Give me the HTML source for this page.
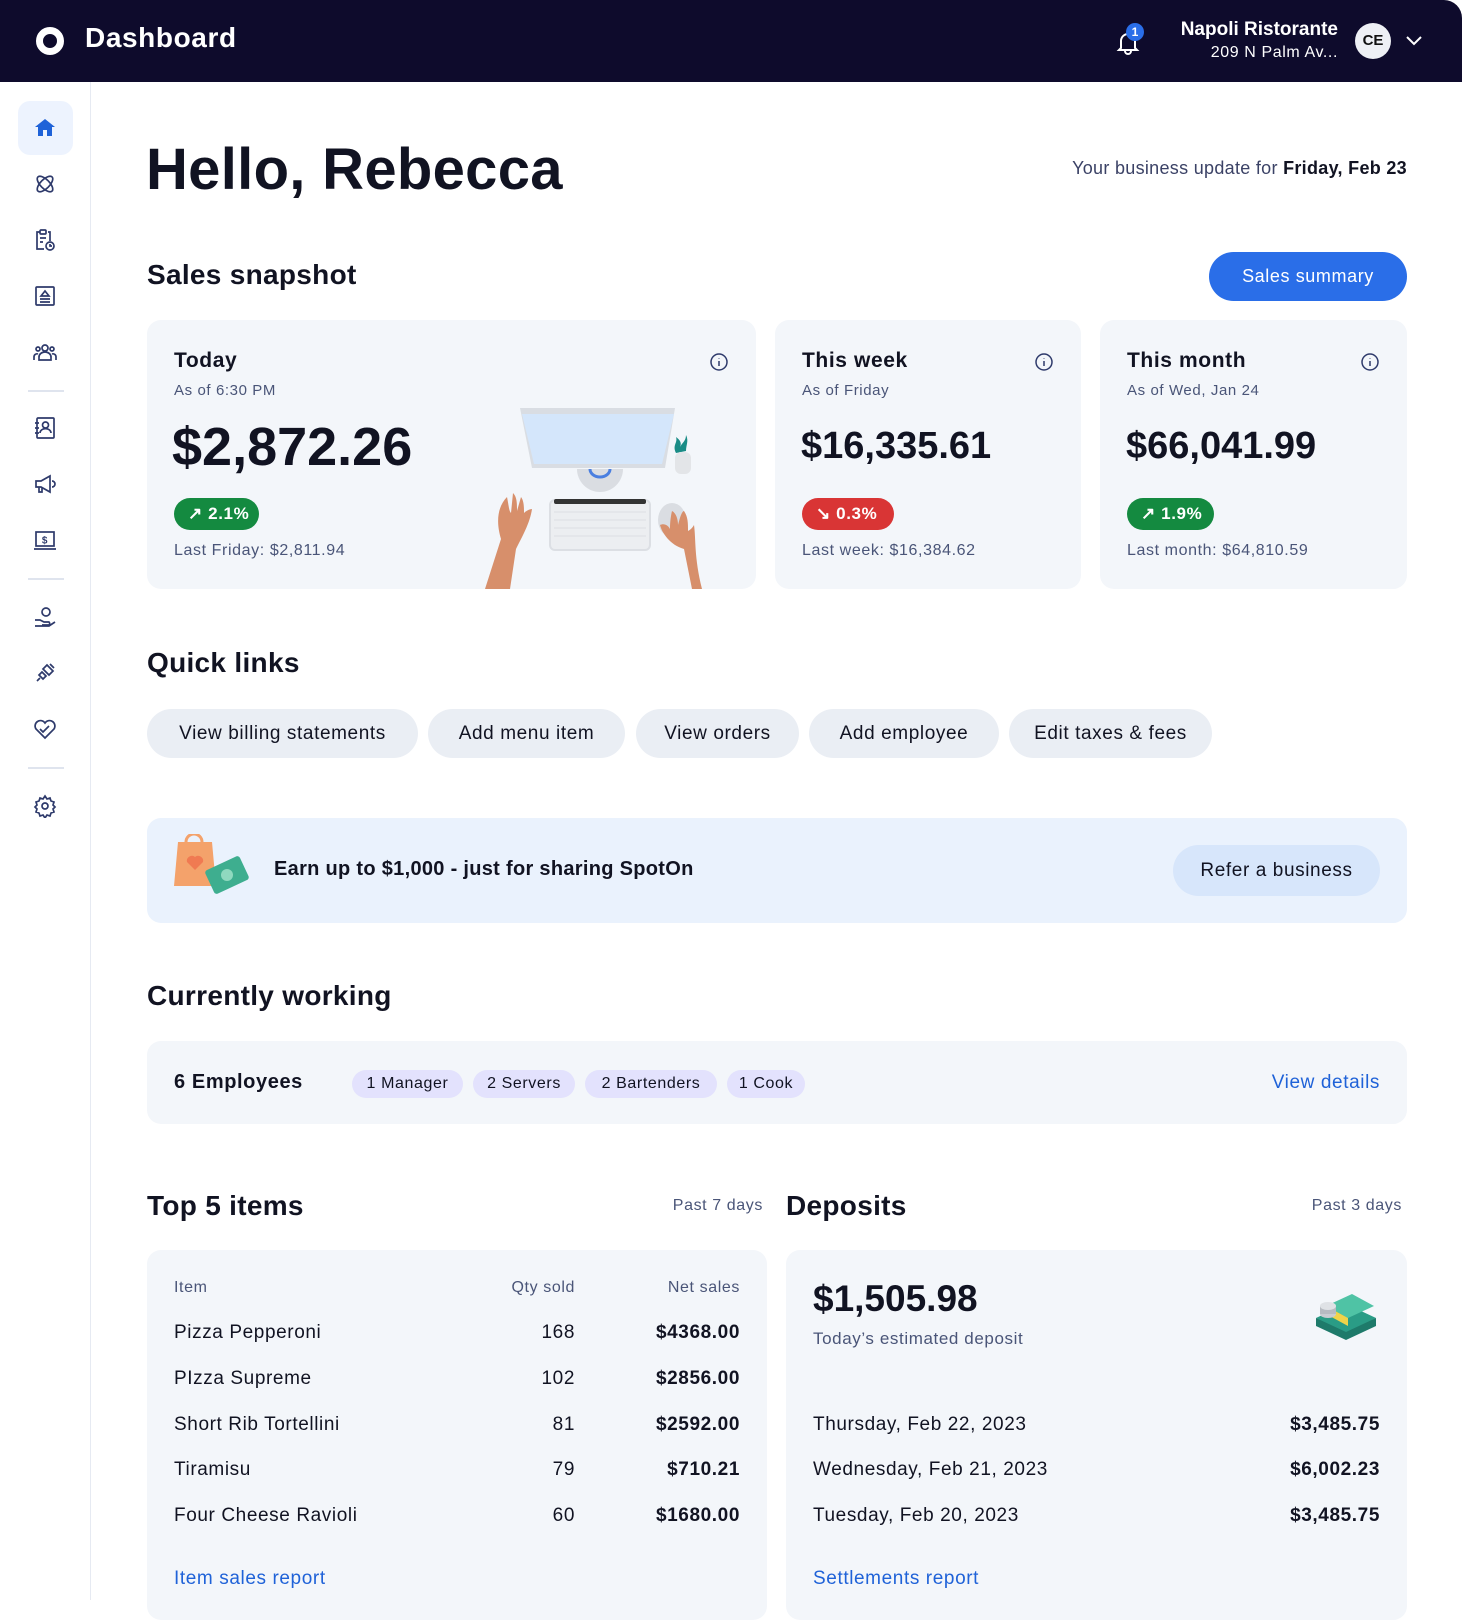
<!DOCTYPE html>
<html><head><meta charset="utf-8"><style>
*{box-sizing:border-box;margin:0;padding:0}
body{width:1462px;height:1600px;overflow:hidden;background:#fff;font-family:"Liberation Sans",sans-serif;color:#111322;position:relative;letter-spacing:0.6px}
.a{position:absolute;white-space:nowrap}
.hdr{left:0;top:0;width:1462px;height:82px;background:#0e0b2c;border-radius:0 18px 0 0}
.side{left:0;top:82px;width:91px;height:1518px;border-right:1px solid #e6eaf2}
.ic{position:absolute;left:33px;width:24px;height:24px}
.div{position:absolute;left:28px;width:36px;height:2px;background:#dfe4ee}
.card{background:#f3f6fa;border-radius:14px}
.h2{font-size:28px;font-weight:bold;letter-spacing:0.3px}
.sub{color:#4a5578;font-size:15px}
.badge{height:32px;border-radius:16px;color:#fff;font-weight:bold;font-size:17px;line-height:32px;padding-left:14px}
.pill{height:49px;border-radius:25px;background:#eaeef4;font-size:19px;line-height:49px;text-align:center}
.chip{height:28px;border-radius:14px;background:#e3e2fd;font-size:16px;line-height:28px;text-align:center;top:1070px}
.row{font-size:19px}
.r{text-align:right}
.blue{color:#1f62d8}
</style></head><body>
<div class="a hdr"></div>
<div class="a" style="left:36px;top:27px;width:28px;height:28px;border-radius:50%;border:7px solid #fff"></div>
<div class="a" style="left:85px;top:22px;font-size:28px;font-weight:bold;color:#fff">Dashboard</div>
<svg class="a" style="left:1114px;top:28px" width="28" height="28" viewBox="0 0 28 28" fill="none" stroke="#fff" stroke-width="2"><path d="M7 20V13a7 7 0 0 1 14 0v7l2 2H5z"/><path d="M11 23a3 3 0 0 0 6 0"/></svg>
<div class="a" style="left:1126px;top:23px;width:18px;height:18px;border-radius:50%;background:#2a6ee8;color:#fff;font-size:12px;text-align:center;line-height:18px;font-weight:bold;letter-spacing:0">1</div>
<div class="a" style="right:124px;top:19px;font-size:19px;font-weight:bold;color:#fff;letter-spacing:0">Napoli Ristorante</div>
<div class="a" style="right:124px;top:44px;font-size:16px;color:#fff">209 N Palm Av...</div>
<div class="a" style="left:1355px;top:23px;width:36px;height:36px;border-radius:50%;background:#eef0f5;color:#111;font-size:15px;font-weight:bold;text-align:center;line-height:36px;letter-spacing:0">CE</div>
<svg class="a" style="left:1405px;top:33px" width="18" height="14" viewBox="0 0 18 14" fill="none" stroke="#fff" stroke-width="2"><path d="M2 4l7 7 7-7"/></svg>

<div class="a side">
<div style="position:absolute;left:18px;top:19px;width:55px;height:54px;border-radius:12px;background:#edf3fe"></div>
<svg class="ic" style="top:34px" viewBox="0 0 24 24"><path d="M2 11L12 3l10 8h-3v9H5v-9z" fill="#1f62d8"/><rect x="10" y="14" width="4" height="6" fill="#edf3fe"/></svg>
<svg class="ic" style="top:90px" viewBox="0 0 24 24" fill="none" stroke="#2e3a6b" stroke-width="1.7"><ellipse cx="12" cy="12" rx="10" ry="4.5" transform="rotate(45 12 12)"/><ellipse cx="12" cy="12" rx="10" ry="4.5" transform="rotate(-45 12 12)"/></svg>
<svg class="ic" style="top:146px" viewBox="0 0 24 24" fill="none" stroke="#2e3a6b" stroke-width="1.7"><path d="M15 4h2v9M11 21H4V4h3"/><rect x="7" y="2" width="6" height="4" rx="1"/><path d="M7 10h6M7 14h3"/><circle cx="17" cy="18" r="4"/><path d="M17 16v2h2"/></svg>
<svg class="ic" style="top:202px" viewBox="0 0 24 24" fill="none" stroke="#2e3a6b" stroke-width="1.7"><rect x="3" y="3" width="18" height="18" rx="1"/><path d="M8 12l4-5 4 5zM7 15h10M7 18h10"/></svg>
<svg class="ic" style="top:258px" viewBox="0 0 24 24" fill="none" stroke="#2e3a6b" stroke-width="1.7"><circle cx="12" cy="8" r="3"/><circle cx="5" cy="9" r="2"/><circle cx="19" cy="9" r="2"/><path d="M6 20v-3a6 5 0 0 1 12 0v3zM1 20v-3a3 3 0 0 1 4-3M23 20v-3a3 3 0 0 0-4-3"/></svg>
<div class="div" style="top:308px"></div>
<svg class="ic" style="top:334px" viewBox="0 0 24 24" fill="none" stroke="#2e3a6b" stroke-width="1.7"><rect x="4" y="2" width="17" height="20" rx="1"/><circle cx="12.5" cy="9" r="3"/><path d="M7 17a5 4 0 0 1 11 0M2 7h4M2 12h4M2 17h4"/></svg>
<svg class="ic" style="top:390px" viewBox="0 0 24 24" fill="none" stroke="#2e3a6b" stroke-width="1.7"><path d="M3 9h5l9-5v16l-9-5H3zM6 15v5h3v-5M19 9a3 3 0 0 1 0 6"/></svg>
<svg class="ic" style="top:446px" viewBox="0 0 24 24" fill="none" stroke="#2e3a6b" stroke-width="1.7"><rect x="3" y="4" width="18" height="14"/><path d="M1 21h22"/><text x="12" y="15.5" font-size="10" text-anchor="middle" fill="#2e3a6b" stroke="none" font-weight="bold">$</text></svg>
<div class="div" style="top:496px"></div>
<svg class="ic" style="top:523px" viewBox="0 0 24 24" fill="none" stroke="#2e3a6b" stroke-width="1.7"><circle cx="13" cy="7" r="4"/><path d="M2 15h5l4 2h5a2 2 0 0 1 0 3H9M2 21h14l6-4"/></svg>
<svg class="ic" style="top:579px" viewBox="0 0 24 24" fill="none" stroke="#2e3a6b" stroke-width="1.7"><path d="M4 20l3-3M9 11l4 4-3 3-4-4zM14 4l6 6-4 4-6-6zM17 3l4 4"/></svg>
<svg class="ic" style="top:635px" viewBox="0 0 24 24" fill="none" stroke="#2e3a6b" stroke-width="1.7"><path d="M12 21L3 12a5 5 0 0 1 9-6 5 5 0 0 1 9 6zM7 12l3 3 6-6"/></svg>
<div class="div" style="top:685px"></div>
<svg class="ic" style="top:712px" viewBox="0 0 24 24" fill="none" stroke="#2e3a6b" stroke-width="1.7"><circle cx="12" cy="12" r="3"/><path d="M12 2l2 3 3-1 1 3 3 1-1 3 2 2-2 2 1 3-3 1-1 3-3-1-2 3-2-3-3 1-1-3-3-1 1-3-2-2 2-2-1-3 3-1 1-3 3 1z"/></svg>
</div>

<div class="a" style="left:146px;top:136px;font-size:58px;font-weight:bold;letter-spacing:0.3px">Hello, Rebecca</div>
<div class="a" style="right:55px;top:158px;font-size:18px;color:#3b4266;letter-spacing:0.3px">Your business update for <b style="color:#111322">Friday, Feb 23</b></div>

<div class="a h2" style="left:147px;top:259px">Sales snapshot</div>
<div class="a" style="left:1209px;top:252px;width:198px;height:49px;border-radius:25px;background:#2a6ee8;color:#fff;font-size:18px;text-align:center;line-height:49px">Sales summary</div>

<div class="a card" style="left:147px;top:320px;width:609px;height:269px"></div>
<div class="a card" style="left:775px;top:320px;width:306px;height:269px"></div>
<div class="a card" style="left:1100px;top:320px;width:307px;height:269px"></div>

<div class="a" style="left:174px;top:349px;font-size:21px;font-weight:bold">Today</div>
<div class="a sub" style="left:174px;top:382px">As of 6:30 PM</div>
<div class="a" style="left:172px;top:416px;font-size:54px;font-weight:bold;letter-spacing:0">$2,872.26</div>
<div class="a badge" style="left:174px;top:498px;width:85px;background:#148a40">↗ 2.1%</div>
<div class="a sub" style="left:174px;top:542px;font-size:16px">Last Friday: $2,811.94</div>

<div class="a" style="left:802px;top:349px;font-size:21px;font-weight:bold">This week</div>
<div class="a sub" style="left:802px;top:382px">As of Friday</div>
<div class="a" style="left:801px;top:425px;font-size:38px;font-weight:bold;letter-spacing:0">$16,335.61</div>
<div class="a badge" style="left:802px;top:498px;width:92px;background:#d93535">↘ 0.3%</div>
<div class="a sub" style="left:802px;top:542px;font-size:16px">Last week: $16,384.62</div>

<div class="a" style="left:1127px;top:349px;font-size:21px;font-weight:bold">This month</div>
<div class="a sub" style="left:1127px;top:382px">As of Wed, Jan 24</div>
<div class="a" style="left:1126px;top:425px;font-size:38px;font-weight:bold;letter-spacing:0">$66,041.99</div>
<div class="a badge" style="left:1127px;top:498px;width:87px;background:#148a40">↗ 1.9%</div>
<div class="a sub" style="left:1127px;top:542px;font-size:16px">Last month: $64,810.59</div>

<svg class="a" style="left:709px;top:352px" width="20" height="20" viewBox="0 0 20 20" fill="none" stroke="#2e3a6b" stroke-width="1.5"><circle cx="10" cy="10" r="8"/><path d="M10 9v5M10 6v.5"/></svg>
<svg class="a" style="left:1034px;top:352px" width="20" height="20" viewBox="0 0 20 20" fill="none" stroke="#2e3a6b" stroke-width="1.5"><circle cx="10" cy="10" r="8"/><path d="M10 9v5M10 6v.5"/></svg>
<svg class="a" style="left:1360px;top:352px" width="20" height="20" viewBox="0 0 20 20" fill="none" stroke="#2e3a6b" stroke-width="1.5"><circle cx="10" cy="10" r="8"/><path d="M10 9v5M10 6v.5"/></svg>

<svg class="a" style="left:470px;top:380px" width="260" height="209" viewBox="0 0 260 209">
<path d="M50 28h155l-10 60H62z" fill="#d9dde3"/>
<path d="M52 34h152l-12 50H64z" fill="#d4e6fb"/>
<path d="M107 89a23 23 0 0 0 46 0z" fill="#dadde2"/>
<path d="M120 89a10 8 0 0 0 20 0" fill="none" stroke="#4a7fe0" stroke-width="3"/>
<rect x="80" y="120" width="100" height="50" rx="5" fill="#eceef1" stroke="#dcdfe4" stroke-width="2"/>
<rect x="84" y="119" width="92" height="5" rx="2" fill="#333"/>
<g stroke="#dcdfe4" stroke-width="1"><path d="M84 132h92M84 140h92M84 148h92M84 156h92"/></g>
<path d="M206 73c-4-8 2-10 0-16 4 3 6 6 4 10 2-4 6-6 6-12 3 6 0 10 0 16z" fill="#1a8c86"/>
<rect x="208" y="84" width="16" height="22" rx="6" fill="#e3e5e8" transform="translate(-3,-12)"/>
<ellipse cx="202" cy="140" rx="14" ry="17" fill="#dadde2"/>
<path d="M15 209l16-50c-6-20-2-34 6-42 2 10 2 14 4 16l2-20c4 4 4 10 4 18l4-14c3 4 3 10 3 16 4-4 8-4 8-4-2 14-10 28-16 40l-6 40z" fill="#d78f6b"/>
<path d="M222 209l-8-40c-14-4-22-16-24-24 4-2 8 0 10 4 0-10 2-18 2-18 4 2 6 8 6 14 2-8 4-14 6-14 4 6 4 12 4 20 4-2 6-6 6-6 2 14 0 32 8 64z" fill="#d78f6b"/>
</svg>

<div class="a h2" style="left:147px;top:647px">Quick links</div>
<div class="a pill" style="left:147px;top:709px;width:271px">View billing statements</div>
<div class="a pill" style="left:428px;top:709px;width:197px">Add menu item</div>
<div class="a pill" style="left:636px;top:709px;width:163px">View orders</div>
<div class="a pill" style="left:809px;top:709px;width:190px">Add employee</div>
<div class="a pill" style="left:1009px;top:709px;width:203px">Edit taxes &amp; fees</div>

<div class="a" style="left:147px;top:818px;width:1260px;height:105px;border-radius:14px;background:#eaf2fd"></div>
<svg class="a" style="left:172px;top:834px" width="80" height="70" viewBox="0 0 80 70">
<path d="M6 8h34l4 44H2z" fill="#f4a26b"/><path d="M14 8a8 8 0 0 1 16 0" fill="none" stroke="#f4a26b" stroke-width="3"/>
<path d="M23 36l-8-8a5 5 0 0 1 8-5 5 5 0 0 1 8 5z" fill="#f07a52"/>
<rect x="36" y="28" width="38" height="26" rx="3" fill="#3eae8f" transform="rotate(-25 55 41)"/>
<circle cx="55" cy="41" r="6" fill="#8fd9bf"/>
</svg>
<div class="a" style="left:274px;top:858px;font-size:20px;font-weight:bold;letter-spacing:0.3px">Earn up to $1,000 - just for sharing SpotOn</div>
<div class="a" style="left:1173px;top:845px;width:207px;height:51px;border-radius:26px;background:#d7e6fb;font-size:19px;text-align:center;line-height:51px">Refer a business</div>

<div class="a h2" style="left:147px;top:980px">Currently working</div>
<div class="a card" style="left:147px;top:1041px;width:1260px;height:83px"></div>
<div class="a" style="left:174px;top:1071px;font-size:20px;font-weight:bold">6 Employees</div>
<div class="a chip" style="left:352px;width:111px">1 Manager</div>
<div class="a chip" style="left:473px;width:102px">2 Servers</div>
<div class="a chip" style="left:585px;width:132px">2 Bartenders</div>
<div class="a chip" style="left:727px;width:78px">1 Cook</div>
<div class="a blue" style="right:82px;top:1072px;font-size:19px">View details</div>

<div class="a h2" style="left:147px;top:1190px">Top 5 items</div>
<div class="a sub" style="right:699px;top:1197px;font-size:16px">Past 7 days</div>
<div class="a h2" style="left:786px;top:1190px">Deposits</div>
<div class="a sub" style="right:60px;top:1197px;font-size:16px">Past 3 days</div>

<div class="a card" style="left:147px;top:1250px;width:620px;height:370px"></div>
<div class="a card" style="left:786px;top:1250px;width:621px;height:370px"></div>

<div class="a sub" style="left:174px;top:1279px;font-size:16px">Item</div>
<div class="a sub r" style="right:887px;top:1279px;font-size:16px">Qty sold</div>
<div class="a sub r" style="right:722px;top:1279px;font-size:16px">Net sales</div>

<div class="a row" style="left:174px;top:1322px">Pizza Pepperoni</div><div class="a row" style="right:887px;top:1322px">168</div><div class="a row" style="right:722px;top:1322px;font-weight:bold">$4368.00</div>
<div class="a row" style="left:174px;top:1368px">PIzza Supreme</div><div class="a row" style="right:887px;top:1368px">102</div><div class="a row" style="right:722px;top:1368px;font-weight:bold">$2856.00</div>
<div class="a row" style="left:174px;top:1414px">Short Rib Tortellini</div><div class="a row" style="right:887px;top:1414px">81</div><div class="a row" style="right:722px;top:1414px;font-weight:bold">$2592.00</div>
<div class="a row" style="left:174px;top:1459px">Tiramisu</div><div class="a row" style="right:887px;top:1459px">79</div><div class="a row" style="right:722px;top:1459px;font-weight:bold">$710.21</div>
<div class="a row" style="left:174px;top:1505px">Four Cheese Ravioli</div><div class="a row" style="right:887px;top:1505px">60</div><div class="a row" style="right:722px;top:1505px;font-weight:bold">$1680.00</div>
<div class="a blue" style="left:174px;top:1568px;font-size:19px">Item sales report</div>

<div class="a" style="left:813px;top:1278px;font-size:37px;font-weight:bold;letter-spacing:0">$1,505.98</div>
<div class="a sub" style="left:813px;top:1329px;font-size:17px">Today’s estimated deposit</div>
<svg class="a" style="left:1312px;top:1284px" width="70" height="56" viewBox="0 0 70 56">
<path d="M4 34l30-14 30 14-30 16z" fill="#2a9c86"/><path d="M4 34v8l30 14v-8zM64 34v8L34 56v-8z" fill="#1e7a6a"/>
<path d="M14 22l26-12 22 12-26 12z" fill="#4fc3a5"/><path d="M14 22v8l22 12v-8z" fill="#f0d34a"/>
<ellipse cx="16" cy="30" rx="8" ry="4" fill="#c9ccd2"/><rect x="8" y="22" width="16" height="8" fill="#b7bbc2"/><ellipse cx="16" cy="22" rx="8" ry="4" fill="#dfe2e6"/>
</svg>
<div class="a row" style="left:813px;top:1414px">Thursday, Feb 22, 2023</div><div class="a row" style="right:82px;top:1414px;font-weight:bold">$3,485.75</div>
<div class="a row" style="left:813px;top:1459px">Wednesday, Feb 21, 2023</div><div class="a row" style="right:82px;top:1459px;font-weight:bold">$6,002.23</div>
<div class="a row" style="left:813px;top:1505px">Tuesday, Feb 20, 2023</div><div class="a row" style="right:82px;top:1505px;font-weight:bold">$3,485.75</div>
<div class="a blue" style="left:813px;top:1568px;font-size:19px">Settlements report</div>
</body></html>
